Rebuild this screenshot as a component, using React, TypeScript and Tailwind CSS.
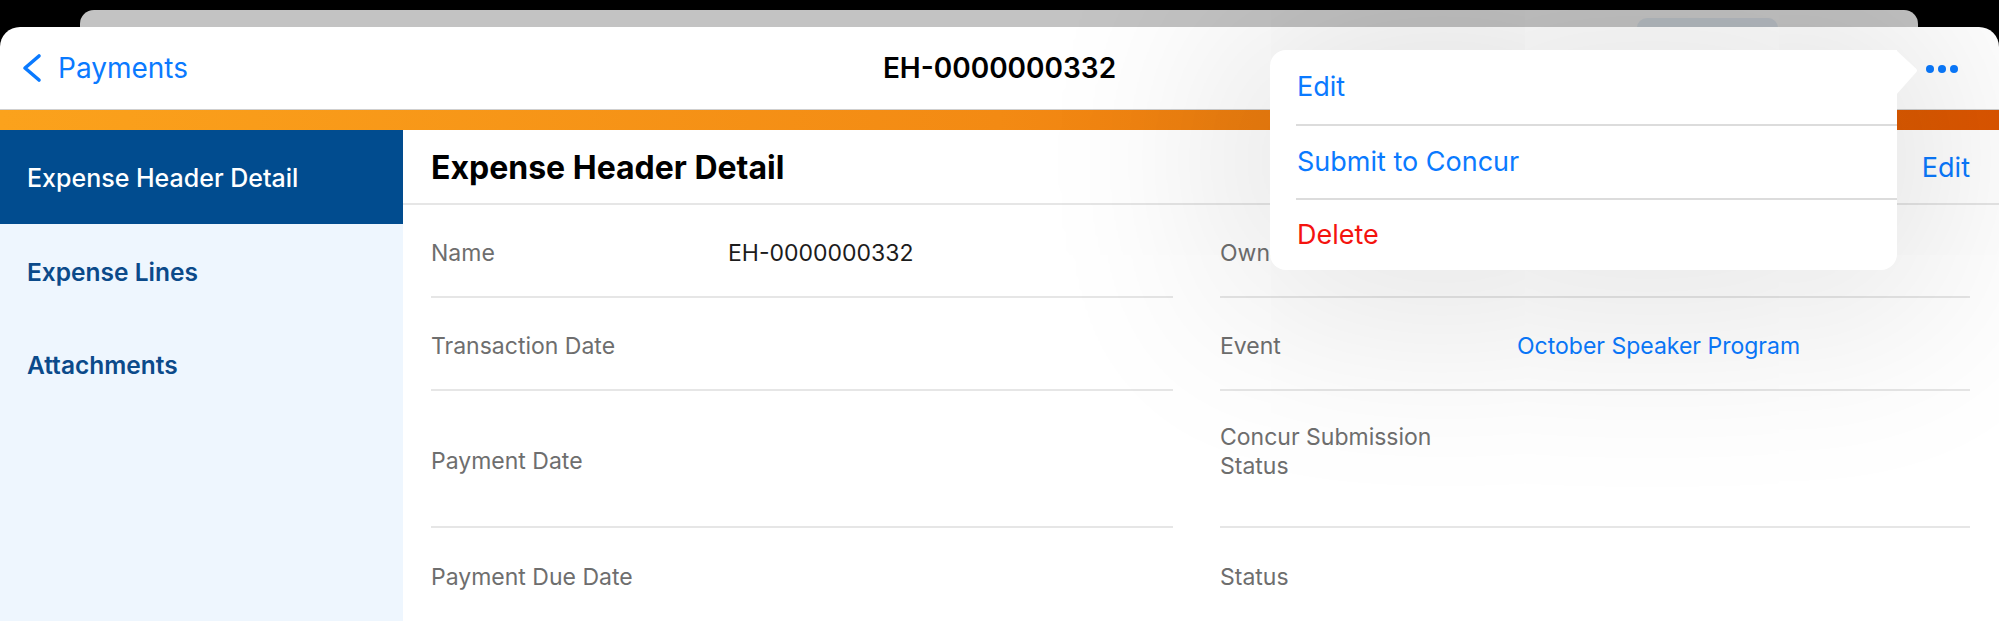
import React from "react";

const Row = ({
  label,
  value,
  valueClass = "text-[#1c1c1c]",
  h = "h-[93px]",
  border = true,
  labelClass = "",
}: {
  label: React.ReactNode;
  value?: string;
  valueClass?: string;
  h?: string;
  border?: boolean;
  labelClass?: string;
}) => (
  <div className={`${h} flex items-center pt-[5px] ${border ? "border-b-2 border-[#e6e6e6]" : ""}`}>
    <div className={`w-[297px] shrink-0 text-[23px] leading-[29px] text-[#6e6e6e] pr-4 ${labelClass}`}>{label}</div>
    <div className={`text-[23px] leading-[29px] ${valueClass}`}>{value}</div>
  </div>
);

export default function App() {
  return (
    <div className="relative w-[1999px] h-[621px] overflow-hidden bg-black font-['Inter','Roboto',sans-serif]">
      {/* back card */}
      <div className="ml-[80px] mr-[81px] mt-[10px] h-[17px] rounded-t-[14px] bg-[#c3c3c3] overflow-hidden flex justify-end">
        <div className="mt-[8px] mr-[140px] w-[141px] h-[20px] rounded-full bg-[#b3b9bf]" />
      </div>

      {/* main card */}
      <div className="h-[594px] rounded-t-[20px] bg-white flex flex-col overflow-hidden">
        {/* nav bar */}
        <div className="h-[83px] shrink-0 grid grid-cols-[1fr_auto_1fr] items-center border-b border-[#cfcfcf]">
          <div className="flex items-center pl-[20px] gap-[14px] text-[#0a7aff]">
            <svg width="24" height="30" viewBox="0 0 24 30" fill="none">
              <path d="M19 3 L5 15 L19 27" stroke="#0a7aff" strokeWidth="3.6" strokeLinecap="round" strokeLinejoin="round" />
            </svg>
            <span className="text-[28px] leading-none">Payments</span>
          </div>
          <div className="text-[28px] font-semibold leading-none text-black">EH-0000000332</div>
          <div className="flex justify-end items-center pr-[41px] gap-[4px] pt-[1px]">
            <span className="w-[8px] h-[8px] rounded-full bg-[#0a7aff]" />
            <span className="w-[8px] h-[8px] rounded-full bg-[#0a7aff]" />
            <span className="w-[8px] h-[8px] rounded-full bg-[#0a7aff]" />
          </div>
        </div>

        {/* orange bar */}
        <div className="h-[20px] shrink-0 bg-gradient-to-r from-[#fba21c] via-[#f38a13] to-[#dc5500]" />

        {/* body */}
        <div className="flex flex-1 min-h-0">
          {/* sidebar */}
          <div className="w-[403px] shrink-0 bg-[#eef6fe] flex flex-col">
            <div className="h-[94px] bg-[#014c8f] flex items-center pl-[27px] pt-[4px] text-[25px] font-medium text-white">
              Expense Header Detail
            </div>
            <div className="h-[93px] flex items-center pl-[27px] pt-[4px] text-[24.5px] font-semibold text-[#0b4a8a]">
              Expense Lines
            </div>
            <div className="h-[93px] flex items-center pl-[27px] pt-[4px] text-[24.5px] font-semibold text-[#0b4a8a]">
              Attachments
            </div>
          </div>

          {/* content */}
          <div className="flex-1 flex flex-col">
            <div className="h-[75px] shrink-0 flex items-center justify-between pl-[28px] pr-[29px] pt-[3px] border-b-2 border-[#e6e6e6]">
              <div className="text-[32px] font-bold text-black">Expense Header Detail</div>
              <div className="text-[27px] text-[#0a7aff]">Edit</div>
            </div>
            <div className="grid grid-cols-[742px_750px] gap-x-[47px] pl-[28px]">
              <Row label="Name" value="EH-0000000332" />
              <Row label="Owner" value="" />
              <Row label="Transaction Date" />
              <Row label="Event" value="October Speaker Program" valueClass="text-[#0a7aff]" />
              <Row label="Payment Date" h="h-[137px]" />
              <Row label={<>Concur Submission<br />Status</>} h="h-[137px]" labelClass="mb-[18px]" />
              <Row label="Payment Due Date" h="h-[94px]" border={false} />
              <Row label="Status" h="h-[94px]" border={false} />
            </div>
          </div>
        </div>
      </div>

      {/* popover menu */}
      <div className="absolute left-[1270px] top-[50px] w-[627px] h-[220px] bg-white rounded-[16px] rounded-tr-none shadow-[0_0_200px_40px_rgba(0,0,0,0.12)] flex flex-col">
        <svg className="absolute right-[-22px] top-0" width="23" height="46" viewBox="0 0 23 46">
          <path d="M0 0 L20 18.5 Q22 20.5 20 22.5 L0 45 Z" fill="white" />
        </svg>
        <div className="h-[74px] flex items-center pl-[27px] text-[27px] text-[#0a7aff]">Edit</div>
        <div className="ml-[26px] h-[2px] bg-[#dcdcdc]" />
        <div className="h-[72px] flex items-center pl-[27px] text-[27px] text-[#0a7aff]">Submit to Concur</div>
        <div className="ml-[26px] h-[2px] bg-[#dcdcdc]" />
        <div className="flex-1 flex items-center pl-[27px] text-[27px] text-[#f4140f]">Delete</div>
      </div>
    </div>
  );
}
